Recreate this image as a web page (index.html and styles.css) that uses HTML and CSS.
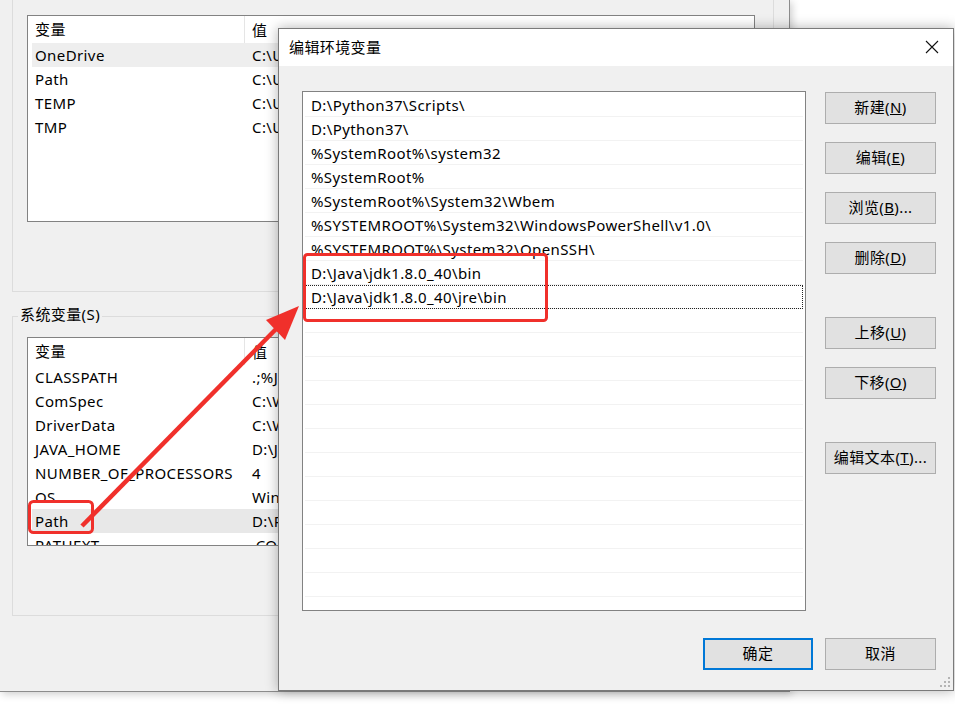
FILE: index.html
```html
<!DOCTYPE html>
<html lang="zh-CN">
<head>
	<meta charset="UTF-8">
	<meta name="viewport" content="width=device-width, initial-scale=1.0">
	<title>编辑环境变量</title>
	<link rel="stylesheet" href="styles.css">
</head>
<body>
	<!-- background window: 环境变量 (value column is hidden under the dialog) -->
	<div class="envwin">
		<div class="group group-user">
			<div class="varlist varlist-user">
				<div class="vhead"><span class="c1">变量</span><span class="c2">值</span></div>
				<div class="vrow hot"><span class="c1">OneDrive</span><span class="c2">C:\U</span></div>
				<div class="vrow"><span class="c1">Path</span><span class="c2">C:\U</span></div>
				<div class="vrow"><span class="c1">TEMP</span><span class="c2">C:\U</span></div>
				<div class="vrow"><span class="c1">TMP</span><span class="c2">C:\U</span></div>
			</div>
		</div>
		<div class="group group-sys">
			<div class="glabel">系统变量(S)</div>
			<div class="varlist varlist-sys">
				<div class="vhead"><span class="c1">变量</span><span class="c2">值</span></div>
				<div class="vrow"><span class="c1">CLASSPATH</span><span class="c2">.;%J</span></div>
				<div class="vrow"><span class="c1">ComSpec</span><span class="c2">C:\W</span></div>
				<div class="vrow"><span class="c1">DriverData</span><span class="c2">C:\W</span></div>
				<div class="vrow"><span class="c1">JAVA_HOME</span><span class="c2">D:\J</span></div>
				<div class="vrow"><span class="c1">NUMBER_OF_PROCESSORS</span><span class="c2">4</span></div>
				<div class="vrow"><span class="c1">OS</span><span class="c2">Win</span></div>
				<div class="vrow sel"><span class="c1">Path</span><span class="c2">D:\P</span></div>
				<div class="vrow"><span class="c1">PATHEXT</span><span class="c2">.CO</span></div>
			</div>
		</div>
	</div>

	<!-- dialog: 编辑环境变量 -->
	<div class="dlg">
		<div class="dlg-title">
			<span>编辑环境变量</span>
			<svg class="close" width="14" height="14" viewBox="0 0 14 14"><path d="M1 1L13 13M13 1L1 13" stroke="#111" stroke-width="1.1" fill="none"/></svg>
		</div>
		<div class="dlg-body">
			<div class="paths">
				<div class="prow">D:\Python37\Scripts\</div>
				<div class="prow">D:\Python37\</div>
				<div class="prow">%SystemRoot%\system32</div>
				<div class="prow">%SystemRoot%</div>
				<div class="prow">%SystemRoot%\System32\Wbem</div>
				<div class="prow">%SYSTEMROOT%\System32\WindowsPowerShell\v1.0\</div>
				<div class="prow">%SYSTEMROOT%\System32\OpenSSH\</div>
				<div class="prow">D:\Java\jdk1.8.0_40\bin</div>
				<div class="prow focus">D:\Java\jdk1.8.0_40\jre\bin</div>
				<div class="prow"></div>
				<div class="prow"></div>
				<div class="prow"></div>
				<div class="prow"></div>
				<div class="prow"></div>
				<div class="prow"></div>
				<div class="prow"></div>
				<div class="prow"></div>
				<div class="prow"></div>
				<div class="prow"></div>
				<div class="prow"></div>
				<div class="prow"></div>
				<div class="prow"></div>
			</div>
			<div class="side">
				<button class="btn">新建(<u>N</u>)</button>
				<button class="btn">编辑(<u>E</u>)</button>
				<button class="btn">浏览(<u>B</u>)...</button>
				<button class="btn">删除(<u>D</u>)</button>
				<button class="btn gap">上移(<u>U</u>)</button>
				<button class="btn">下移(<u>O</u>)</button>
				<button class="btn gap">编辑文本(<u>T</u>)...</button>
			</div>
		</div>
		<div class="dlg-foot">
			<button class="btn default">确定</button>
			<button class="btn">取消</button>
		</div>
		<svg class="grip" width="12" height="12" viewBox="0 0 12 12" fill="#b4b4b4">
			<rect x="9" y="1" width="2" height="2"/>
			<rect x="5" y="5" width="2" height="2"/><rect x="9" y="5" width="2" height="2"/>
			<rect x="1" y="9" width="2" height="2"/><rect x="5" y="9" width="2" height="2"/><rect x="9" y="9" width="2" height="2"/>
		</svg>
	</div>

	<!-- red annotation marks -->
	<svg class="marks" width="955" height="704" viewBox="0 0 955 704">
		<g fill="none" stroke="#f0302b" stroke-width="3">
			<rect x="304.5" y="254.5" width="242" height="66" rx="3"/>
			<rect x="29.5" y="501.5" width="63" height="31" rx="4"/>
		</g>
		<line x1="82" y1="526" x2="280" y2="325" stroke="#f0302b" stroke-width="4.5"/>
		<polygon points="299,306 266,320 285,340" fill="#f0302b"/>
	</svg>
</body>
</html>
```

FILE: styles.css
```css
* {
	box-sizing: border-box;
}
body {
	margin: 0;
	width: 955px;
	height: 704px;
	overflow: hidden;
	position: relative;
	background-color: #fff;
	color: #000;
	font-family: "Noto Sans", "Noto Sans CJK SC", sans-serif;
	font-size: 15px;
	letter-spacing: 0.4px;
}

/* background window */
.envwin {
	position: absolute;
	left: 0;
	top: 0;
	width: 790px;
	height: 692px;
	background-color: #f0f0f0;
	border-right: 1px solid #8c8c8c;
	border-bottom: 1px solid #8c8c8c;
	box-shadow: 2px 2px 8px rgba(0, 0, 0, 0.2);
}
.group {
	margin-left: 12px;
	width: 762px;
	border: 1px solid #dcdcdc;
}
.group-user {
	height: 292px;
	border-top: none;
	padding: 15px 0 0 14px;
}
.group-sys {
	margin-top: 24px;
	height: 300px;
	padding-left: 14px;
}
.glabel {
	width: fit-content;
	margin: -13px 0 0 -9px;
	padding: 0 2px;
	line-height: 20px;
	background-color: #f0f0f0;
}
.varlist {
	width: 728px;
	border: 1px solid #828282;
	background-color: #fff;
	overflow: hidden;
}
.varlist-user {
	height: 207px;
}
.varlist-sys {
	height: 209px;
	margin-top: 13px;
}
.vhead, .vrow {
	display: flex;
	align-items: center;
	margin-left: 4px;
	white-space: nowrap;
}
.vhead {
	height: 27px;
}
.vrow {
	height: 24px;
}
.c1 {
	width: 213px;
	flex: none;
	padding-left: 3px;
}
.c2 {
	padding-left: 7px;
}
.vhead .c1 {
	border-right: 1px solid #e5e5e5;
	line-height: 27px;
}
.hot {
	background-color: #eeeeee;
}
.sel {
	background-color: #e8e8e8;
}

/* dialog */
.dlg {
	position: absolute;
	left: 278px;
	top: 28px;
	width: 676px;
	height: 663px;
	background-color: #f0f0f0;
	border: 1px solid #7a7a7a;
	box-shadow: 0 0 12px rgba(0, 0, 0, 0.3);
}
.dlg-title {
	height: 37px;
	background-color: #fff;
	display: flex;
	align-items: center;
	justify-content: space-between;
	padding: 0 14px 2px 10px;
}
.dlg-body {
	display: flex;
	gap: 19px;
	padding: 25px 17px 0 23px;
}
.paths {
	width: 504px;
	height: 520px;
	border: 1px solid #828282;
	background-color: #fff;
	padding: 1px;
	overflow: hidden;
}
.prow {
	height: 24px;
	line-height: 24px;
	margin: 0 1px;
	padding-left: 6px;
	border-bottom: 1px solid #f2f2f2;
	white-space: nowrap;
}
.focus {
	outline: 1px dotted #222;
	outline-offset: -1px;
}
.side {
	width: 111px;
	padding-top: 1px;
	display: flex;
	flex-direction: column;
	gap: 18px;
}
.btn {
	height: 32px;
	width: 111px;
	padding: 0 0 3px;
	border: 1px solid #adadad;
	background-color: #e1e1e1;
	color: #000;
	font-family: "Noto Sans", "Noto Sans CJK SC", sans-serif;
	font-size: 15px;
	letter-spacing: 0.4px;
}
.btn.gap {
	margin-top: 25px;
}
.dlg-foot {
	display: flex;
	justify-content: flex-end;
	gap: 12px;
	padding: 27px 17px 0 0;
}
.dlg-foot .default {
	width: 110px;
	border: 2px solid #0078d7;
}
.grip {
	position: absolute;
	right: 2px;
	bottom: 2px;
}

/* annotation overlay */
.marks {
	position: absolute;
	left: 0;
	top: 0;
	pointer-events: none;
}
```
